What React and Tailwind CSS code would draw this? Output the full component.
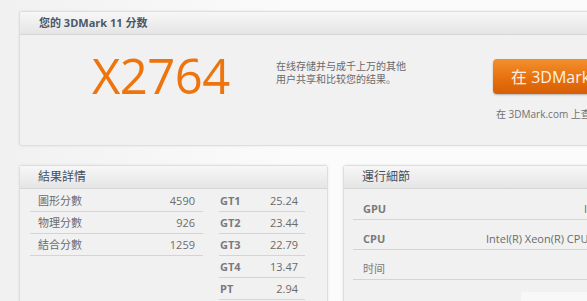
const font = { fontFamily: '"Open Sans", "Noto Sans CJK SC", sans-serif' };

const mainRows = [
  ["圖形分數", "4590"],
  ["物理分數", "926"],
  ["結合分數", "1259"],
];

const testRows = [
  ["GT1", "25.24"],
  ["GT2", "23.44"],
  ["GT3", "22.79"],
  ["GT4", "13.47"],
  ["PT", "2.94"],
];

const runRows = [
  { k: "GPU", v: "Intel(R) HD Graphics", bold: true, pad: "w-[221px]" },
  { k: "CPU", v: "Intel(R) Xeon(R) CPU E5-2670 0 @ 2.60GHz", bold: true, pad: "w-[123px]" },
  { k: "时间", v: "", bold: false, pad: "w-[123px]" },
];

function PanelHeader({ children, className = "" }) {
  return (
    <div
      className={`h-[23px] flex items-center bg-gradient-to-b from-[#f7f7f7] to-[#e5e5e5] border-b border-[#d6d6d6] text-[11px] font-bold text-[#4b5866] ${className}`}
    >
      {children}
    </div>
  );
}

export default function App() {
  return (
    <div
      className="w-[587px] h-[301px] overflow-hidden bg-gradient-to-r from-[#f1f1f1] via-[#fbfbfb] to-[#fbfbfb] pt-[11px] pl-[19px]"
      style={font}
    >
      {/* score panel */}
      <div className="w-[640px] h-[135px] rounded-[3px] border border-[#dedede] bg-[#f1f1f1] shadow-[0_0_3px_rgba(0,0,0,0.08)] overflow-hidden">
        <PanelHeader className="pl-[19px]">您的 3DMark 11 分数</PanelHeader>
        <div className="flex items-start">
          <div className="w-[255px] shrink-0 pl-[72px] pt-[10px] text-[49px] leading-[60px] text-[#ee740e] tracking-[-0.5px]">
            X2764
          </div>
          <div className="w-[218px] shrink-0 pt-[25px] pl-[1px] text-[10px] leading-[13px] text-[#6a6a6a]">
            <div>在线存储并与成千上万的其他</div>
            <div>用户共享和比较您的结果。</div>
          </div>
          <div className="flex flex-col shrink-0">
            <div className="mt-[24px] w-[180px] h-[35px] rounded-[4px] bg-gradient-to-b from-[#f2902c] via-[#e8730f] to-[#d75e06] shadow-[0_1px_2px_rgba(0,0,0,0.25)] flex items-center pl-[18px] text-[16px] text-[#fdf1e6] whitespace-nowrap">
              在 3DMark.com 上保存
            </div>
            <div className="mt-[13px] ml-[3px] text-[10px] text-[#707070] whitespace-nowrap">
              在 3DMark.com 上查看结果
            </div>
          </div>
        </div>
      </div>

      <div className="flex gap-[15px] mt-[19px]">
        {/* result details */}
        <div className="w-[309px] h-[160px] shrink-0 rounded-[3px] border border-[#dedede] bg-[#f1f1f1] shadow-[0_0_3px_rgba(0,0,0,0.08)]">
          <PanelHeader className="pl-[18px] font-normal text-[12px] text-[#45505c]">結果詳情</PanelHeader>
          <div className="flex pl-[10px] pt-[1px]">
            <div className="w-[173px]">
              {mainRows.map(([k, v]) => (
                <div
                  key={k}
                  className="h-[22px] flex items-center justify-between border-b border-[#d4d4d4] pl-[8px] pr-[8px] pt-[2px] text-[11px] text-[#6b6b6b]"
                >
                  <span>{k}</span>
                  <span>{v}</span>
                </div>
              ))}
            </div>
            <div className="w-[86px] ml-[16px]">
              {testRows.map(([k, v]) => (
                <div
                  key={k}
                  className="h-[22px] flex items-center justify-between border-b border-[#d4d4d4] pl-[1px] pr-[7px] pt-[2px] text-[11px] text-[#6b6b6b]"
                >
                  <span className="font-bold text-[#7a7a7a]">{k}</span>
                  <span>{v}</span>
                </div>
              ))}
            </div>
          </div>
        </div>

        {/* run details */}
        <div className="w-[320px] h-[160px] shrink-0 rounded-[3px] border border-[#dedede] bg-[#f1f1f1] shadow-[0_0_3px_rgba(0,0,0,0.08)]">
          <PanelHeader className="pl-[18px] font-normal text-[12px] text-[#45505c]">運行細節</PanelHeader>
          <div className="pl-[9px] pt-[1px]">
            {runRows.map((r) => (
              <div
                key={r.k}
                className="h-[30px] flex items-end pb-[2px] border-b border-[#d4d4d4] pl-[10px] text-[11px] text-[#6b6b6b]"
              >
                <span className={`${r.pad} shrink-0 text-[#7a7a7a] ${r.bold ? "font-bold" : ""}`}>{r.k}</span>
                <span className="whitespace-nowrap">{r.v}</span>
              </div>
            ))}
            <div className="mt-[12px] ml-[168px] w-[120px] h-[10px] rounded-t-[3px] bg-[#f8f8f8]" />
          </div>
        </div>
      </div>
    </div>
  );
}
